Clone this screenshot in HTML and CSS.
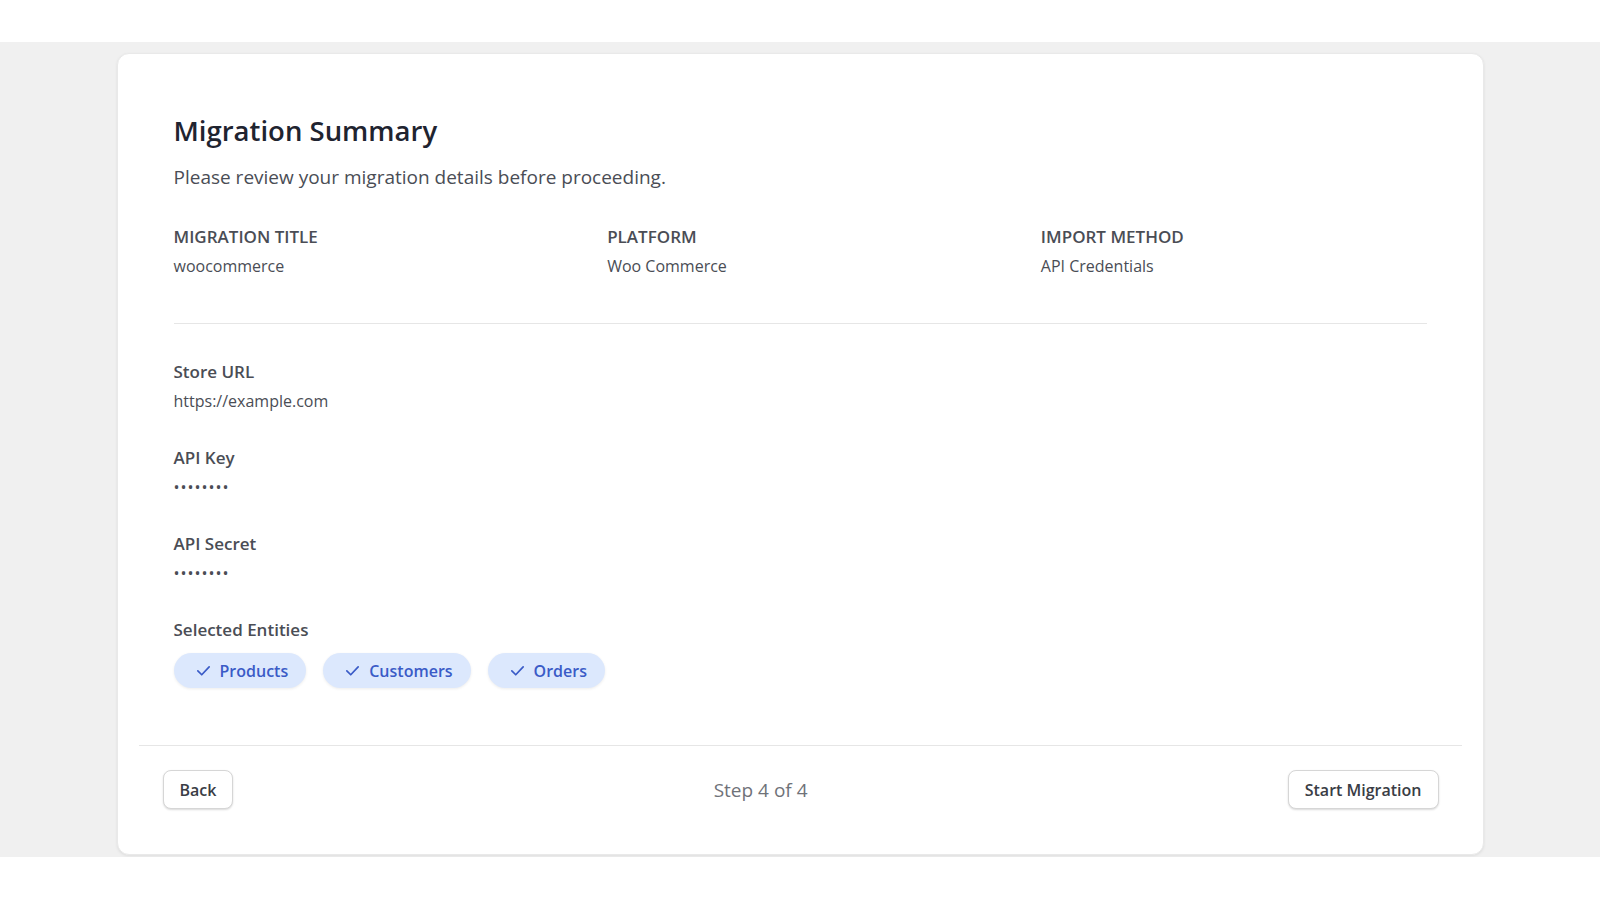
FILE: index.html
```html
<!DOCTYPE html>
<html lang="en">
<head>
  <meta charset="UTF-8">
  <meta name="viewport" content="width=device-width, initial-scale=1">
  <title>Migration Summary</title>
  <link rel="stylesheet" href="styles.css">
</head>
<body>
  <header class="topbar"></header>

  <main class="main">
    <div class="card">
      <section class="summary">
        <h1>Migration Summary</h1>
        <p class="lead">Please review your migration details before proceeding.</p>

        <div class="overview">
          <div class="overview-item">
            <div class="overview-label">Migration Title</div>
            <div class="overview-value">woocommerce</div>
          </div>
          <div class="overview-item">
            <div class="overview-label">Platform</div>
            <div class="overview-value">Woo Commerce</div>
          </div>
          <div class="overview-item">
            <div class="overview-label">Import Method</div>
            <div class="overview-value">API Credentials</div>
          </div>
        </div>

        <div class="fields">
          <div class="field">
            <div class="field-label">Store URL</div>
            <div class="field-value">https://example.com</div>
          </div>
          <div class="field">
            <div class="field-label">API Key</div>
            <div class="field-value secret">••••••••</div>
          </div>
          <div class="field">
            <div class="field-label">API Secret</div>
            <div class="field-value secret">••••••••</div>
          </div>
          <div class="field">
            <div class="field-label">Selected Entities</div>
            <div class="chips">
              <span class="chip">
                <svg viewBox="0 0 24 24"><polyline points="4 12.5 9.5 18 20 7"/></svg>
                Products
              </span>
              <span class="chip">
                <svg viewBox="0 0 24 24"><polyline points="4 12.5 9.5 18 20 7"/></svg>
                Customers
              </span>
              <span class="chip">
                <svg viewBox="0 0 24 24"><polyline points="4 12.5 9.5 18 20 7"/></svg>
                Orders
              </span>
            </div>
          </div>
        </div>
      </section>

      <!-- フッター -->
      <div class="card-footer">
        <button class="btn">Back</button>
        <span class="step">Step 4 of 4</span>
        <button class="btn">Start Migration</button>
      </div>
    </div>
  </main>
</body>
</html>
```

FILE: styles.css
```css
:root {
  --color-bg:     #f0f0f0;
  --color-white:  #ffffff;
  --color-title:  #1f2430;
  --color-text:   #4a4d55;
  --color-muted:  #6f7279;
  --color-line:   #e6e6e6;
  --color-chip:   #dce8fd;
  --color-chip-text: #3a5bc7;
  --font-base: 'Open Sans', 'Noto Sans', Arial, sans-serif;
}
*, *::before, *::after { box-sizing: border-box; }
body {
  margin: 0; padding: 0;
  font-family: var(--font-base);
  background: var(--color-white);
  color: var(--color-text);
}
.topbar { height: 42px; background: var(--color-white); }
.main {
  background: var(--color-bg);
  padding: 11px 0 2px;
}
.card {
  width: 1367px;
  margin: 0 auto;
  background: var(--color-white);
  border: 1px solid #e9e9e9;
  border-radius: 12px;
  box-shadow: 0 1px 3px rgba(0,0,0,0.08);
  padding: 21px;
}

/* サマリー */
.summary {
  padding: 38px 35px 57px;
}
.summary h1 {
  margin: 0;
  font-size: 27.5px;
  line-height: 36px;
  font-weight: 600;
  color: var(--color-title);
}
.lead {
  margin: 14px 0 0;
  font-size: 19px;
  line-height: 28px;
  color: var(--color-text);
}
.overview {
  display: grid;
  grid-template-columns: repeat(3, 1fr);
  gap: 48px;
  margin-top: 34px;
  padding-bottom: 45px;
  border-bottom: 1px solid var(--color-line);
}
.overview-label {
  font-size: 17px; line-height: 24px;
  font-weight: 600;
  text-transform: uppercase;
  color: var(--color-text);
}
.overview-value,
.field-value {
  margin-top: 5px;
  font-size: 16px; line-height: 24px;
  color: var(--color-text);
}
.field-value.secret { letter-spacing: 1px; }
.fields {
  display: flex; flex-direction: column;
  gap: 33px;
  margin-top: 36px;
}
.field-label {
  font-size: 17px; line-height: 24px;
  font-weight: 600;
  color: var(--color-text);
}

/* チップ */
.chips {
  display: flex; gap: 17px;
  margin-top: 11px;
}
.chip {
  display: inline-flex; align-items: center; gap: 8px;
  height: 35px;
  padding: 0 18px 0 21px;
  border-radius: 18px;
  background: var(--color-chip);
  box-shadow: 0 1px 3px rgba(0,0,0,0.08);
  color: var(--color-chip-text);
  font-size: 16px; font-weight: 600;
}
.chip svg {
  width: 17px; height: 17px;
  fill: none; stroke: currentColor; stroke-width: 2.4;
  stroke-linecap: round; stroke-linejoin: round;
}

/* フッター */
.card-footer {
  display: flex; align-items: center; justify-content: space-between;
  border-top: 1px solid var(--color-line);
  padding: 24px 23px 24px 24px;
}
.btn {
  height: 39px;
  padding: 0 16px;
  background: var(--color-white);
  border: 1px solid #d6d6d6;
  border-radius: 8px;
  box-shadow: 0 1px 2px rgba(0,0,0,0.15);
  font-family: var(--font-base);
  font-size: 16px; font-weight: 600;
  color: #3a3d45;
  cursor: pointer;
}
.step {
  font-size: 19px;
  color: var(--color-muted);
}
```
